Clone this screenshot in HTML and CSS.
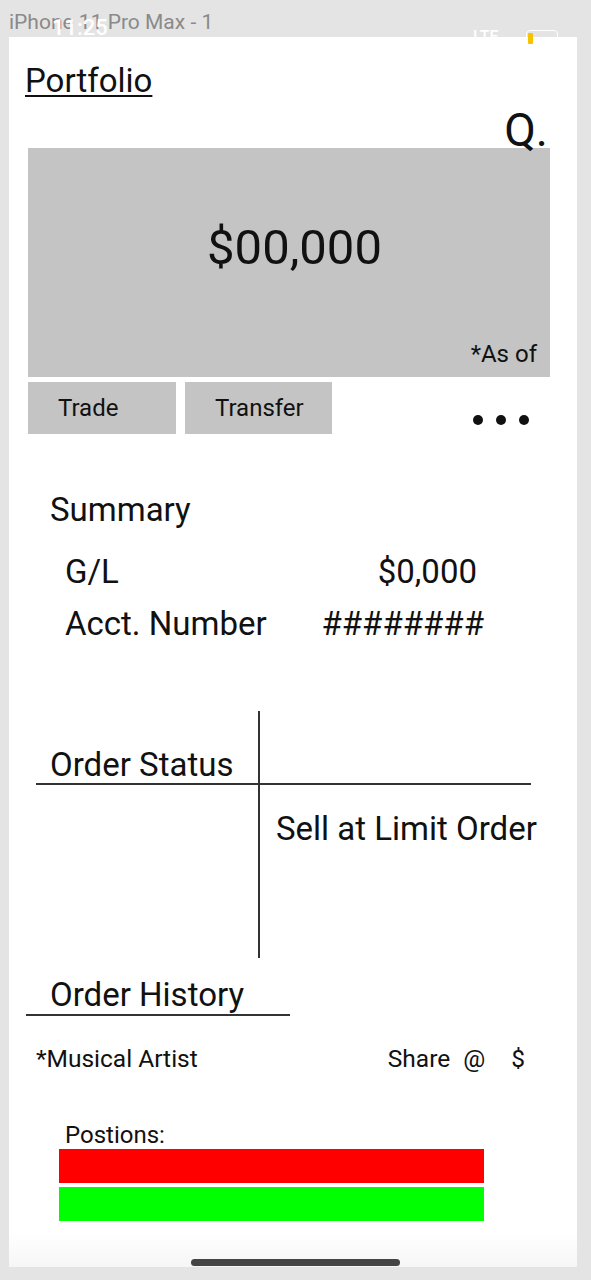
FILE: index.html
```html
<!DOCTYPE html>
<html lang="en">
<head>
<meta charset="utf-8">
<title>Portfolio</title>
<link rel="stylesheet" href="styles.css">
</head>
<body>
<div class="device">
  <div class="caption">iPhone 11 Pro Max - 1</div>
  <div class="status">
    <span class="time">11:25</span>
    <span class="lte">LTE</span>
    <span class="battery"><span class="charge"></span></span>
  </div>
  <main class="screen">
    <header class="topbar"><h1 class="title">Portfolio</h1></header>
    <div class="search">Q.</div>
    <section class="balance">
      <div class="amount">$00,000</div>
      <div class="asof">*As of</div>
    </section>
    <div class="actions">
      <button class="btn">Trade</button>
      <button class="btn btn-wide">Transfer</button>
      <span class="more"><i class="dot"></i><i class="dot"></i><i class="dot"></i></span>
    </div>
    <section class="summary">
      <h2 class="summary-title">Summary</h2>
      <div class="summary-rows">
        <div class="row row-gl"><span>G/L</span><span class="val">$0,000</span></div>
        <div class="row"><span>Acct. Number</span><span class="val">########</span></div>
      </div>
    </section>
    <section class="orders">
      <div class="cell cell-head">Order Status</div>
      <div class="cell cell-head-right"></div>
      <div class="cell cell-empty"></div>
      <div class="cell cell-detail">Sell at Limit Order</div>
    </section>
    <h2 class="history-title">Order History</h2>
    <div class="history-row">
      <span class="artist">*Musical Artist</span>
      <span class="col-share">Share</span>
      <span class="col-at">@</span>
      <span class="col-dollar">$</span>
    </div>
    <div class="positions-label">Postions:</div>
    <div class="bars">
      <div class="bar bar-red"></div>
      <div class="bar bar-green"></div>
    </div>
    <div class="home"></div>
  </main>
</div>
</body>
</html>
```

FILE: styles.css
```css
* { box-sizing: border-box; }

html, body {
  margin: 0;
  padding: 0;
}

body {
  background: #e4e4e4;
  font-family: Roboto, "Liberation Sans", sans-serif;
  color: #111;
  width: 591px;
  height: 1280px;
  overflow: hidden;
}

.device {
  position: relative;
  width: 591px;
  height: 1280px;
}

.caption {
  height: 37px;
  padding: 9px 0 0 9px;
  font-size: 21px;
  line-height: 26px;
  color: #8a8a8a;
}

.status {
  position: absolute;
  left: 0;
  top: 0;
  width: 591px;
  height: 50px;
  z-index: 2;
}

.time {
  position: absolute;
  left: 52px;
  top: 14px;
  font-size: 22px;
  line-height: 28px;
  font-weight: 500;
  color: #fff;
}

.lte {
  position: absolute;
  left: 473px;
  top: 28px;
  font-size: 16px;
  line-height: 18px;
  font-weight: 500;
  color: #fff;
}

.battery {
  position: absolute;
  left: 526px;
  top: 30px;
  width: 32px;
  height: 16px;
  border: 1.5px solid #fff;
  border-radius: 4px;
}

.charge {
  position: absolute;
  left: 1px;
  top: 2px;
  width: 5px;
  height: 11px;
  background: #f5c400;
  border-radius: 1px;
}

.screen {
  margin-left: 9px;
  width: 568px;
  height: 1230px;
  background: linear-gradient(to bottom, #fff 0, #fff 1195px, #f6f6f6 1230px);
  display: flex;
  flex-direction: column;
}

.topbar {
  padding: 24px 0 0 16px;
  height: 64px;
}

.title {
  margin: 0;
  font-size: 33px;
  font-weight: 400;
  line-height: 40px;
  text-decoration: underline;
  text-decoration-thickness: 2px;
  text-underline-offset: 3px;
}

.search {
  margin-top: 9px;
  height: 38px;
  line-height: 41px;
  font-size: 46px;
  text-align: right;
  padding-right: 29px;
  z-index: 1;
}

.balance {
  margin: 0 27px 0 19px;
  height: 229px;
  background: #c4c4c4;
  padding: 72px 13px 0 0;
}

.amount {
  font-size: 49px;
  line-height: 56px;
  text-align: center;
  padding-left: 24px;
}

.asof {
  margin-top: 63px;
  font-size: 24px;
  line-height: 30px;
  text-align: right;
}

.actions {
  margin: 5px 0 0 19px;
  height: 52px;
  display: flex;
  align-items: flex-start;
  gap: 9px;
}

.btn {
  width: 148px;
  height: 52px;
  border: 0;
  margin: 0;
  padding: 0 0 0 30px;
  background: #c4c4c4;
  font-family: inherit;
  font-size: 24px;
  line-height: 52px;
  text-align: left;
  color: #111;
}

.btn-wide { width: 147px; }

.more {
  margin: 33px 0 0 132px;
  display: flex;
  gap: 13px;
}

.dot {
  width: 10px;
  height: 10px;
  border-radius: 50%;
  background: #111;
}

.summary {
  margin-top: 56px;
}

.summary-title {
  margin: 0;
  padding-left: 41px;
  font-size: 33px;
  font-weight: 400;
  line-height: 40px;
}

.summary-rows {
  margin-top: 22px;
  padding: 0 93px 0 56px;
  display: flex;
  flex-direction: column;
  gap: 12px;
}

.row {
  display: flex;
  justify-content: space-between;
  font-size: 33px;
  line-height: 40px;
}

.row-gl .val { margin-right: 7px; }

.orders {
  margin: 67px 46px 0 27px;
  display: grid;
  grid-template-columns: 222px minmax(0, 1fr);
  grid-template-rows: 74px 173px;
}

.cell {
  font-size: 33px;
  line-height: 36px;
}

.cell-head {
  padding: 36px 0 0 14px;
  border-bottom: 2px solid #333;
  white-space: nowrap;
}

.cell-head-right {
  border-left: 2px solid #333;
  border-bottom: 2px solid #333;
}

.cell-detail {
  border-left: 2px solid #333;
  padding: 24px 0 0 16px;
  line-height: 40px;
  white-space: nowrap;
}

.history-title {
  margin: 18px 0 0 17px;
  width: 264px;
  padding-left: 24px;
  font-size: 33px;
  font-weight: 400;
  line-height: 38px;
  border-bottom: 2px solid #333;
  white-space: nowrap;
}

.history-row {
  margin-top: 28px;
  padding-left: 27px;
  display: flex;
  font-size: 24.5px;
  line-height: 30px;
}

.col-share { margin-left: 190px; }
.col-at { margin-left: 13px; }
.col-dollar { margin-left: 26px; }

.positions-label {
  margin-top: 47px;
  padding-left: 56px;
  font-size: 24px;
  line-height: 28px;
}

.bars {
  margin-left: 50px;
  width: 425px;
  display: flex;
  flex-direction: column;
  gap: 4px;
}

.bar { height: 34px; }
.bar-red { background: #ff0000; }
.bar-green { background: #00ff00; }

.home {
  margin: 38px 0 0 182px;
  width: 209px;
  height: 7px;
  border-radius: 4px;
  background: #444;
}
```
